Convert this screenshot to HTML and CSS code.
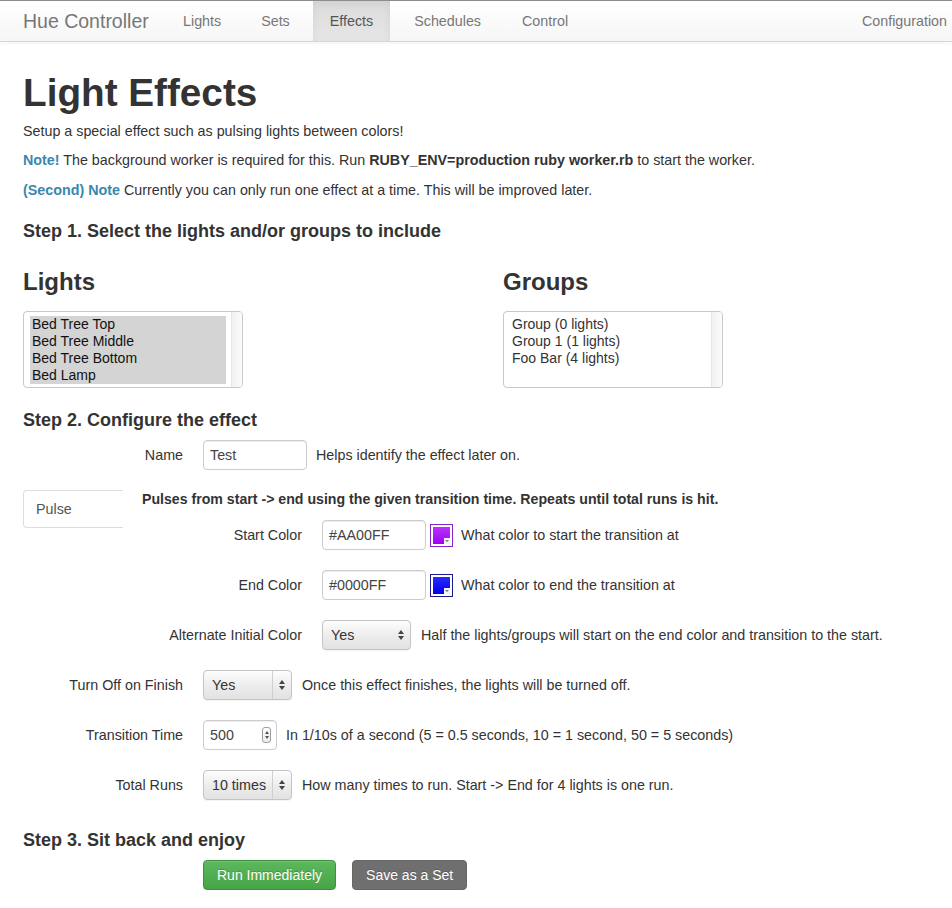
FILE: index.html
```html
<!DOCTYPE html>
<html>
<head>
<meta charset="utf-8">
<title>Hue Controller - Effects</title>
<link rel="stylesheet" href="styles.css">
</head>
<body>
<nav class="navbar">
  <div class="brand">Hue Controller</div>
  <ul class="nav">
    <li>Lights</li>
    <li>Sets</li>
    <li class="active">Effects</li>
    <li>Schedules</li>
    <li>Control</li>
  </ul>
  <div class="nav-right">Configuration</div>
</nav>

<main class="page">
  <h1 class="title">Light Effects</h1>
  <p class="p1">Setup a special effect such as pulsing lights between colors!</p>
  <p class="p2"><strong class="info">Note!</strong> The background worker is required for this. Run <strong>RUBY_ENV=production ruby worker.rb</strong> to start the worker.</p>
  <p class="p3"><strong class="info">(Second) Note</strong> Currently you can only run one effect at a time. This will be improved later.</p>

  <h4 class="step step1">Step 1. Select the lights and/or groups to include</h4>

  <div class="pickers">
    <section class="picker">
      <h2>Lights</h2>
      <div class="listbox">
        <div class="options">
          <div class="opt sel">Bed Tree Top</div>
          <div class="opt sel">Bed Tree Middle</div>
          <div class="opt sel">Bed Tree Bottom</div>
          <div class="opt sel">Bed Lamp</div>
        </div>
        <div class="scroll"></div>
      </div>
    </section>
    <section class="picker">
      <h2>Groups</h2>
      <div class="listbox">
        <div class="options">
          <div class="opt">Group (0 lights)</div>
          <div class="opt">Group 1 (1 lights)</div>
          <div class="opt">Foo Bar (4 lights)</div>
        </div>
        <div class="scroll"></div>
      </div>
    </section>
  </div>

  <h4 class="step step2">Step 2. Configure the effect</h4>

  <div class="row row-name">
    <label class="lbl">Name</label>
    <div class="input text-input w104">Test</div>
    <span class="help h9">Helps identify the effect later on.</span>
  </div>

  <div class="tabs">
    <div class="tab">Pulse</div>
    <div class="tab-content">
      <p class="desc">Pulses from start -&gt; end using the given transition time. Repeats until total runs is hit.</p>
      <div class="row row-first">
        <label class="lbl">Start Color</label>
        <div class="input text-input w104">#AA00FF</div>
        <span class="swatch swatch-purple"><span class="fill"></span><span class="notch"></span></span>
        <span class="help h8">What color to start the transition at</span>
      </div>
      <div class="row">
        <label class="lbl">End Color</label>
        <div class="input text-input w104">#0000FF</div>
        <span class="swatch swatch-blue"><span class="fill"></span><span class="notch"></span></span>
        <span class="help h8">What color to end the transition at</span>
      </div>
      <div class="row">
        <label class="lbl">Alternate Initial Color</label>
        <div class="select">
          <span class="sel-text">Yes</span>
          <span class="arrows"><i class="up"></i><i class="down"></i></span>
        </div>
        <span class="help h10">Half the lights/groups will start on the end color and transition to the start.</span>
      </div>
    </div>
  </div>

  <div class="row row-after">
    <label class="lbl">Turn Off on Finish</label>
    <div class="select divided">
      <span class="sel-text">Yes</span>
      <span class="arrows"><i class="up"></i><i class="down"></i></span>
    </div>
    <span class="help h10">Once this effect finishes, the lights will be turned off.</span>
  </div>
  <div class="row">
    <label class="lbl">Transition Time</label>
    <div class="input number-input">
      <span>500</span>
      <span class="spinner"><i class="up"></i><i class="down"></i></span>
    </div>
    <span class="help h9">In 1/10s of a second (5 = 0.5 seconds, 10 = 1 second, 50 = 5 seconds)</span>
  </div>
  <div class="row">
    <label class="lbl">Total Runs</label>
    <div class="select divided">
      <span class="sel-text">10 times</span>
      <span class="arrows"><i class="up"></i><i class="down"></i></span>
    </div>
    <span class="help h10">How many times to run. Start -&gt; End for 4 lights is one run.</span>
  </div>

  <h4 class="step step3">Step 3. Sit back and enjoy</h4>
  <div class="buttons">
    <button class="btn btn-success">Run Immediately</button>
    <button class="btn btn-gray">Save as a Set</button>
  </div>
</main>
</body>
</html>
```

FILE: styles.css
```css
* { box-sizing: border-box; }

html, body {
  margin: 0;
  padding: 0;
  background: #fff;
}

body {
  font-family: "Liberation Sans", Arial, Helvetica, sans-serif;
  font-size: 14.3px;
  line-height: 20px;
  color: #333;
  width: 952px;
  overflow: hidden;
}

/* ---------- navbar ---------- */
.navbar {
  display: flex;
  align-items: stretch;
  height: 42px;
  border-top: 1px solid #8c8c8c;
  border-bottom: 1px solid #d6d6d6;
  background: linear-gradient(to bottom, #ffffff 0%, #f6f6f6 100%);
  box-shadow: 0 1px 4px rgba(0, 0, 0, 0.06);
}

.brand {
  box-sizing: content-box;
  width: 143px;
  padding-left: 23px;
  font-size: 19.5px;
  line-height: 40px;
  color: #777;
  white-space: nowrap;
}

.nav {
  display: flex;
  gap: 6px;
  margin: 0;
  padding: 0;
  list-style: none;
}

.nav li {
  padding: 0 17px;
  line-height: 40px;
  color: #777;
}

.nav li:nth-child(4) { margin-left: 1px; }
.nav li:nth-child(5) { margin-left: 1px; }

.nav li.active {
  color: #555;
  background: linear-gradient(to bottom, #dcdcdc 0%, #e6e6e6 100%);
  box-shadow: inset 0 3px 8px rgba(0, 0, 0, 0.06);
}

.nav-right {
  margin-left: auto;
  padding-right: 5px;
  line-height: 40px;
  color: #777;
}

/* ---------- page ---------- */
.page {
  display: flex;
  flex-direction: column;
  align-items: flex-start;
  padding-left: 23px;
}

.title {
  margin: 29px 0 0;
  font-size: 38.7px;
  line-height: 44px;
  font-weight: 700;
  color: #333;
}

.page p { margin: 0; }
.p1 { margin-top: 6px !important; }
.p2 { margin-top: 9px !important; }
.p3 { margin-top: 10px !important; }

.info { color: #3a87ad; }
strong { font-weight: 700; }

.step {
  margin: 0;
  font-size: 18px;
  line-height: 22px;
  font-weight: 700;
  color: #333;
}
.step1 { margin-top: 20px; }
.step2 { margin-top: 21px; }
.step3 { margin-top: 29px; }

/* ---------- pickers ---------- */
.pickers {
  display: grid;
  grid-template-columns: 480px 480px;
  margin-top: 26px;
}

.picker h2 {
  margin: 0 0 15px;
  font-size: 24px;
  line-height: 28px;
  font-weight: 700;
  color: #333;
}

.listbox {
  display: flex;
  width: 220px;
  height: 77px;
  border: 1px solid #c8c8c8;
  border-radius: 4px;
  overflow: hidden;
  background: #fff;
}

.options {
  flex: 1;
  padding: 4px 5px 4px 6px;
}

.opt {
  padding-left: 2px;
  line-height: 17px;
  height: 17px;
  font-size: 14px;
  color: #333;
  white-space: nowrap;
}

.opt.sel {
  background: #d4d4d4;
  color: #111;
}

.scroll {
  width: 11px;
  border-left: 1px solid #e6e6e6;
  background: linear-gradient(to right, #f1f1f1, #fbfbfb);
}

/* ---------- form rows ---------- */
.row {
  display: flex;
  align-items: center;
  height: 30px;
  margin-top: 20px;
}

.row-name { margin-top: 9px; }
.row-first { margin-top: 11px; }
.row-after { margin-top: 20px; }

.lbl {
  width: 160px;
  margin-right: 20px;
  text-align: right;
  color: #333;
  white-space: nowrap;
}

.input {
  height: 30px;
  border: 1px solid #cccccc;
  border-radius: 4px;
  background: #fff;
  box-shadow: inset 0 1px 1px rgba(0, 0, 0, 0.075);
  padding: 0 6px;
  line-height: 28px;
  color: #444;
}

.w104 { width: 104px; }

.help { color: #333; white-space: nowrap; }
.h8 { margin-left: 8px; }
.h9 { margin-left: 9px; }
.h10 { margin-left: 10px; }

/* colour wells */
.swatch {
  position: relative;
  display: inline-block;
  width: 23px;
  height: 23px;
  margin-left: 4px;
  padding: 2px;
  border: 1px solid #8a23c9;
  background: #fff;
}
.swatch .fill {
  display: block;
  width: 100%;
  height: 100%;
}
.swatch-purple .fill { background: linear-gradient(to bottom, #b733ff, #a000f2); }
.swatch-blue { border-color: #1a1a8a; }
.swatch-blue .fill { background: linear-gradient(to bottom, #2a2aff, #0000ee); }

.swatch .notch {
  position: absolute;
  right: 2px;
  bottom: 2px;
  width: 6px;
  height: 6px;
  background: #f2f2f2;
}
.swatch .notch::after {
  content: "";
  position: absolute;
  left: 1px;
  top: 2px;
  border-left: 2px solid transparent;
  border-right: 2px solid transparent;
  border-top: 2px solid #777;
}

/* selects */
.select {
  position: relative;
  display: flex;
  align-items: center;
  width: 89px;
  height: 30px;
  border: 1px solid #c4c4c4;
  border-radius: 4px;
  background: linear-gradient(to bottom, #fdfdfd 0%, #ececec 55%, #e2e2e2 100%);
  box-shadow: 0 1px 1px rgba(0, 0, 0, 0.05);
}

.sel-text {
  flex: 1;
  padding-left: 8px;
  color: #333;
  white-space: nowrap;
}

.arrows {
  display: flex;
  flex-direction: column;
  align-items: center;
  gap: 2px;
  width: 19px;
  height: 100%;
  justify-content: center;
}

.select.divided .arrows { border-left: 1px solid #cfcfcf; }

.up {
  width: 0;
  height: 0;
  border-left: 3.5px solid transparent;
  border-right: 3.5px solid transparent;
  border-bottom: 4px solid #444;
}
.down {
  width: 0;
  height: 0;
  border-left: 3.5px solid transparent;
  border-right: 3.5px solid transparent;
  border-top: 4px solid #444;
}

/* number input */
.number-input {
  display: flex;
  align-items: center;
  justify-content: space-between;
  width: 74px;
  padding: 0 5px 0 6px;
}

.spinner {
  display: flex;
  flex-direction: column;
  align-items: center;
  justify-content: center;
  gap: 2px;
  width: 9px;
  height: 16px;
  border: 1px solid #9d9d9d;
  border-radius: 3px;
  background: linear-gradient(to bottom, #ffffff, #ececec);
}
.spinner .up {
  border-left-width: 2px;
  border-right-width: 2px;
  border-bottom-width: 3px;
  border-bottom-color: #555;
}
.spinner .down {
  border-left-width: 2px;
  border-right-width: 2px;
  border-top-width: 3px;
  border-top-color: #555;
}

/* tabs */
.tabs {
  display: flex;
  align-items: flex-start;
  margin-top: 19px;
}

.tab {
  width: 100px;
  height: 38px;
  margin-top: 1px;
  padding-left: 12px;
  border: 1px solid #dddddd;
  border-right: none;
  border-radius: 4px 0 0 4px;
  line-height: 36px;
  color: #555;
}

.tab-content {
  padding-left: 19px;
}

.desc {
  font-size: 14.15px;
  font-weight: 700;
  line-height: 20px;
  color: #333;
  white-space: nowrap;
}

/* buttons */
.buttons {
  display: flex;
  gap: 16px;
  margin-top: 9px;
  margin-left: 180px;
}

.btn {
  height: 30px;
  padding: 0 13px;
  border-radius: 4px;
  font-family: "Liberation Sans", Arial, Helvetica, sans-serif;
  font-size: 14px;
  line-height: 28px;
  color: #fff;
  cursor: pointer;
  text-shadow: 0 -1px 0 rgba(0, 0, 0, 0.2);
}

.btn-success {
  border: 1px solid #3e8f3e;
  background: linear-gradient(to bottom, #5cb85c 0%, #47a447 100%);
  box-shadow: inset 0 1px 0 rgba(255, 255, 255, 0.15), 0 1px 1px rgba(0, 0, 0, 0.075);
}

.btn-gray {
  border: 1px solid #666;
  background: #6f6f6f;
}
```
